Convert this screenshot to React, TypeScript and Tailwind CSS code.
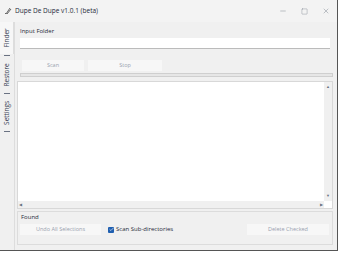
import { Minus, Square, X, Check } from 'lucide-react';

const font = { fontFamily: '"Open Sans", "Noto Sans", sans-serif' };

function TabLabel({ label, h, active }: { label: string; h: string; active?: boolean }) {
  return (
    <div className={`flex items-center justify-center ${h} ${active ? 'bg-[#f7f7f7] border-r border-[#ddd]' : ''}`}>
      <span className="-rotate-90 whitespace-nowrap text-[6.5px] text-gray-700">{label}</span>
    </div>
  );
}

export default function App() {
  return (
    <div className="w-[340px] h-[253px] bg-white overflow-hidden" style={font}>
      <div className="w-[338px] h-[251px] flex flex-col bg-[#f0f0f0] border-r border-b border-[#555]">
        {/* title bar */}
        <div className="h-[22px] flex items-center bg-[#f3f3f3] shrink-0">
          <svg width="8" height="8" viewBox="0 0 8 8" className="ml-[4px]">
            <path d="M2 7 L6 1 M3 7 L7 2 M2 7 L1 6" stroke="#666" strokeWidth="1" fill="none" />
          </svg>
          <span className="ml-[3px] text-[6.5px] text-gray-800">Dupe De Dupe v1.0.1 (beta)</span>
          <div className="ml-auto flex items-center gap-[14px] mr-[7px] text-gray-600">
            <Minus size={8} strokeWidth={1} />
            <Square size={7} strokeWidth={1} />
            <X size={8} strokeWidth={1} />
          </div>
        </div>
        <div className="flex flex-1 min-h-0">
          {/* vertical tabs */}
          <div className="w-[14px] flex flex-col shrink-0">
            <TabLabel label="Finder" h="h-[32px]" active />
            <div className="mx-[4px] mt-[1px] h-px bg-gray-500" />
            <TabLabel label="Restore" h="h-[37px]" />
            <div className="mx-[4px] h-px bg-gray-500" />
            <TabLabel label="Settings" h="h-[37px]" />
            <div className="mx-[4px] h-px bg-gray-500" />
          </div>
          {/* main panel */}
          <div className="flex-1 flex flex-col border-l border-[#ddd] pl-[2px] pr-[3px] pb-[5px]">
            <div className="text-[6px] text-gray-800 mt-[5px] ml-[3px]">Input Folder</div>
            <div className="h-[11px] mt-[2px] ml-[3px] mr-[4px] bg-white border-b border-[#bbb]" />
            <div className="flex gap-[4px] mt-[11px] ml-[5px]">
              <div className="w-[62px] h-[11px] bg-[#f7f7f7] flex items-center justify-center text-[5.5px] text-gray-400">Scan</div>
              <div className="w-[74px] h-[11px] bg-[#f7f7f7] flex items-center justify-center text-[5.5px] text-gray-400">Stop</div>
            </div>
            <div className="h-[4px] mt-[2px] ml-[3px] mr-[1px] bg-[#e6e6e6] border border-[#cfcfcf]" />
            <div className="flex-1 mt-[4px] mr-[1px] bg-white border border-[#d8d8d8] flex flex-col">
              <div className="flex flex-1">
                <div className="flex-1" />
                <div className="w-[8px] bg-[#f0f0f0] flex flex-col items-center justify-between py-[2px]">
                  <span className="text-[4px] text-gray-500">▲</span>
                  <span className="text-[4px] text-gray-500">▼</span>
                </div>
              </div>
              <div className="h-[7px] flex items-center justify-between bg-[#f0f0f0] px-[1px] mr-[8px]">
                <span className="text-[4px] text-gray-500">◀</span>
                <span className="text-[4px] text-gray-500">▶</span>
              </div>
            </div>
            <div className="mt-[2px] mr-[1px] h-[34px] border border-[#dcdcdc] flex flex-col">
              <div className="text-[6px] text-gray-800 ml-[3px] mt-[1px]">Found</div>
              <div className="flex items-center mt-[2px] ml-[2px] mr-[3px]">
                <div className="w-[81px] h-[11px] bg-[#f7f7f7] flex items-center justify-center text-[5.5px] text-gray-400">Undo All Selections</div>
                <div className="ml-[7px] w-[6px] h-[6px] bg-[#1f5fb0] rounded-[1px] flex items-center justify-center">
                  <Check size={5} strokeWidth={3} color="white" />
                </div>
                <span className="ml-[2px] text-[6px] text-gray-800">Scan Sub-directories</span>
                <div className="ml-auto w-[82px] h-[11px] bg-[#f7f7f7] flex items-center justify-center text-[5.5px] text-gray-400">Delete Checked</div>
              </div>
            </div>
          </div>
        </div>
      </div>
    </div>
  );
}
